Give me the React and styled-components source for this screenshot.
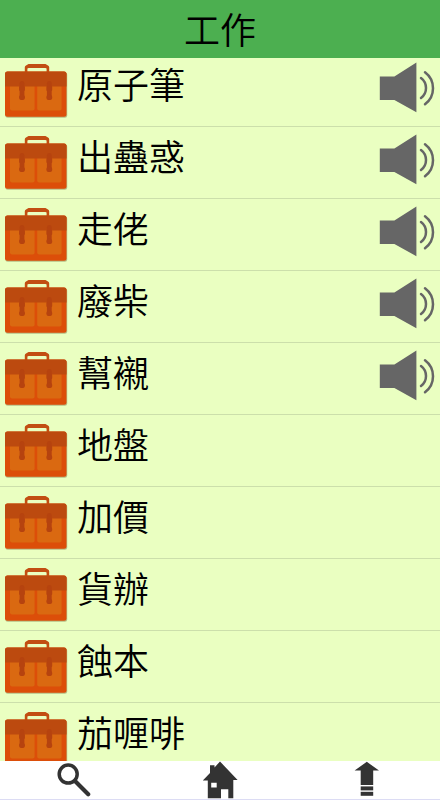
import React from "react";
import styled, { createGlobalStyle } from "styled-components";

const GlobalStyle = createGlobalStyle`
  *, *::before, *::after { box-sizing: border-box; }
  body {
    margin: 0;
    background: #fff;
    color: #000;
    font-family: "Noto Sans CJK TC", "Noto Sans", sans-serif;
  }
`;

const Screen = styled.div`
  display: flex;
  flex-direction: column;
  height: 100vh;
`;

const Header = styled.header`
  flex: none;
  height: 58px;
  background: #4caf50;
  text-align: center;
`;

const Title = styled.h1`
  margin: 0;
  font-size: 36px;
  font-weight: 350;
  line-height: 56px;
`;

const ListArea = styled.main`
  flex: 1;
  min-height: 0;
  overflow: hidden;
  background: #eaffc1;
`;

const WordList = styled.ul`
  list-style: none;
  margin: -3px 0 0;
  padding: 0;
`;

const WordRow = styled.li`
  display: flex;
  align-items: flex-start;
  height: 72px;
  padding: 0 5px 0 4px;
  border-bottom: 1px solid #ccdfab;
`;

const BagIcon = styled.svg`
  flex: none;
  width: 64px;
  height: 56px;
  margin-top: 8px;
`;

const Word = styled.span`
  flex: 1;
  margin-left: 9px;
  font-size: 36px;
  font-weight: 350;
  line-height: 56px;
`;

const SoundButton = styled.button`
  flex: none;
  margin-top: 6px;
  padding: 0;
  border: 0;
  background: none;
  cursor: pointer;

  svg {
    display: block;
    width: 56px;
    height: 52px;
  }
`;

const TabBar = styled.nav`
  flex: none;
  display: grid;
  grid-template-columns: repeat(3, 1fr);
  height: 39px;
  background: #fff;
  border-bottom: 1px solid #dcdcf4;
`;

const TabButton = styled.button`
  display: flex;
  justify-content: center;
  padding: 0;
  border: 0;
  background: none;
  color: #333;
  cursor: pointer;

  svg {
    display: block;
    width: 36px;
    height: 38px;
  }
`;

const words = [
  { text: "原子筆", sound: true },
  { text: "出蠱惑", sound: true },
  { text: "走佬", sound: true },
  { text: "廢柴", sound: true },
  { text: "幫襯", sound: true },
  { text: "地盤", sound: false },
  { text: "加價", sound: false },
  { text: "貨辦", sound: false },
  { text: "蝕本", sound: false },
  { text: "茄喱啡", sound: false },
];

function Briefcase() {
  return (
    <BagIcon viewBox="0 0 64 56" aria-hidden="true">
      <rect x="1.4" y="9.4" width="61.8" height="45.4" rx="2.5" fill="#8a8a5a" opacity="0.55" />
      <path
        fill="#c24e12"
        fillRule="evenodd"
        d="M20.8 9V4.2Q20.8 3 22 2.4L24.5 1H41.5L44 2.4Q45.2 3 45.2 4.2V9ZM23.4 9H42.6V5.6L41.4 5H24.6L23.4 5.6Z"
      />
      <rect x="1" y="8.4" width="61.5" height="45.4" rx="2.5" fill="#dc4e09" />
      <path d="M6 22H30.6V45.4Q30.6 47.4 28.6 47.4H8Q6 47.4 6 45.4Z" fill="#da6911" />
      <path d="M33.2 22H57.6V45.4Q57.6 47.4 55.6 47.4H35.2Q33.2 47.4 33.2 45.4Z" fill="#da6911" />
      <path d="M3.5 8.4H60Q62.5 8.4 62.5 10.9V23.4H1V10.9Q1 8.4 3.5 8.4Z" fill="#bc4a0f" />
      <g fill="#b6430f">
        <rect x="15.6" y="18" width="4.8" height="19" rx="2.4" />
        <rect x="42.9" y="18" width="4.8" height="19" rx="2.4" />
        <rect x="15.1" y="23" width="5.8" height="5" rx="1" />
        <rect x="42.4" y="23" width="5.8" height="5" rx="1" />
        <rect x="15.1" y="31.8" width="5.8" height="5.2" rx="2.5" />
        <rect x="42.4" y="31.8" width="5.8" height="5.2" rx="2.5" />
      </g>
    </BagIcon>
  );
}

function Speaker() {
  return (
    <svg viewBox="0 0 56 52" aria-hidden="true">
      <path d="M.8 15.4H15.4L37.4 1.6V51.2L15.4 39H.8Z" fill="#666" />
      <g fill="none" stroke="#666" strokeWidth="2.5" strokeLinecap="round">
        <path d="M42 17A12.5 12.5 0 0 1 42 37" />
        <path d="M46 11.2A20 20 0 0 1 46 43.2" />
      </g>
    </svg>
  );
}

function SearchIcon() {
  return (
    <svg viewBox="0 0 36 38" aria-hidden="true" fill="none" stroke="currentColor">
      <circle cx="13.2" cy="13.1" r="9" strokeWidth="3.5" />
      <path d="M20 20L33.2 33.2" strokeWidth="4.2" strokeLinecap="round" />
    </svg>
  );
}

function HomeIcon() {
  return (
    <svg viewBox="0 0 36 38" aria-hidden="true">
      <path
        fill="currentColor"
        fillRule="evenodd"
        d="M18 .5L35.6 19H31.3V37.3H26.3V28.3H19V37.3H5.8V19.6H.8L8 12V4.3H12.5V6.6ZM9.2 21.8V26.4H14.7V21.8Z"
      />
    </svg>
  );
}

function TopIcon() {
  return (
    <svg viewBox="0 0 36 38" aria-hidden="true" fill="currentColor">
      <path d="M17.8 .8L30 9.6H24.2V24H11.7V9.6H5.6Z" />
      <rect x="11.7" y="25.4" width="12.5" height="4" />
      <rect x="11.7" y="30.8" width="12.5" height="4" />
    </svg>
  );
}

export default function App() {
  return (
    <Screen lang="zh-Hant">
      <GlobalStyle />
      <Header>
        <Title>工作</Title>
      </Header>
      <ListArea>
        <WordList>
          {words.map(({ text, sound }) => (
            <WordRow key={text}>
              <Briefcase />
              <Word>{text}</Word>
              {sound && (
                <SoundButton type="button" aria-label={`播放 ${text}`}>
                  <Speaker />
                </SoundButton>
              )}
            </WordRow>
          ))}
        </WordList>
      </ListArea>
      <TabBar>
        <TabButton type="button" aria-label="搜尋">
          <SearchIcon />
        </TabButton>
        <TabButton type="button" aria-label="主頁">
          <HomeIcon />
        </TabButton>
        <TabButton type="button" aria-label="返回頂部">
          <TopIcon />
        </TabButton>
      </TabBar>
    </Screen>
  );
}
